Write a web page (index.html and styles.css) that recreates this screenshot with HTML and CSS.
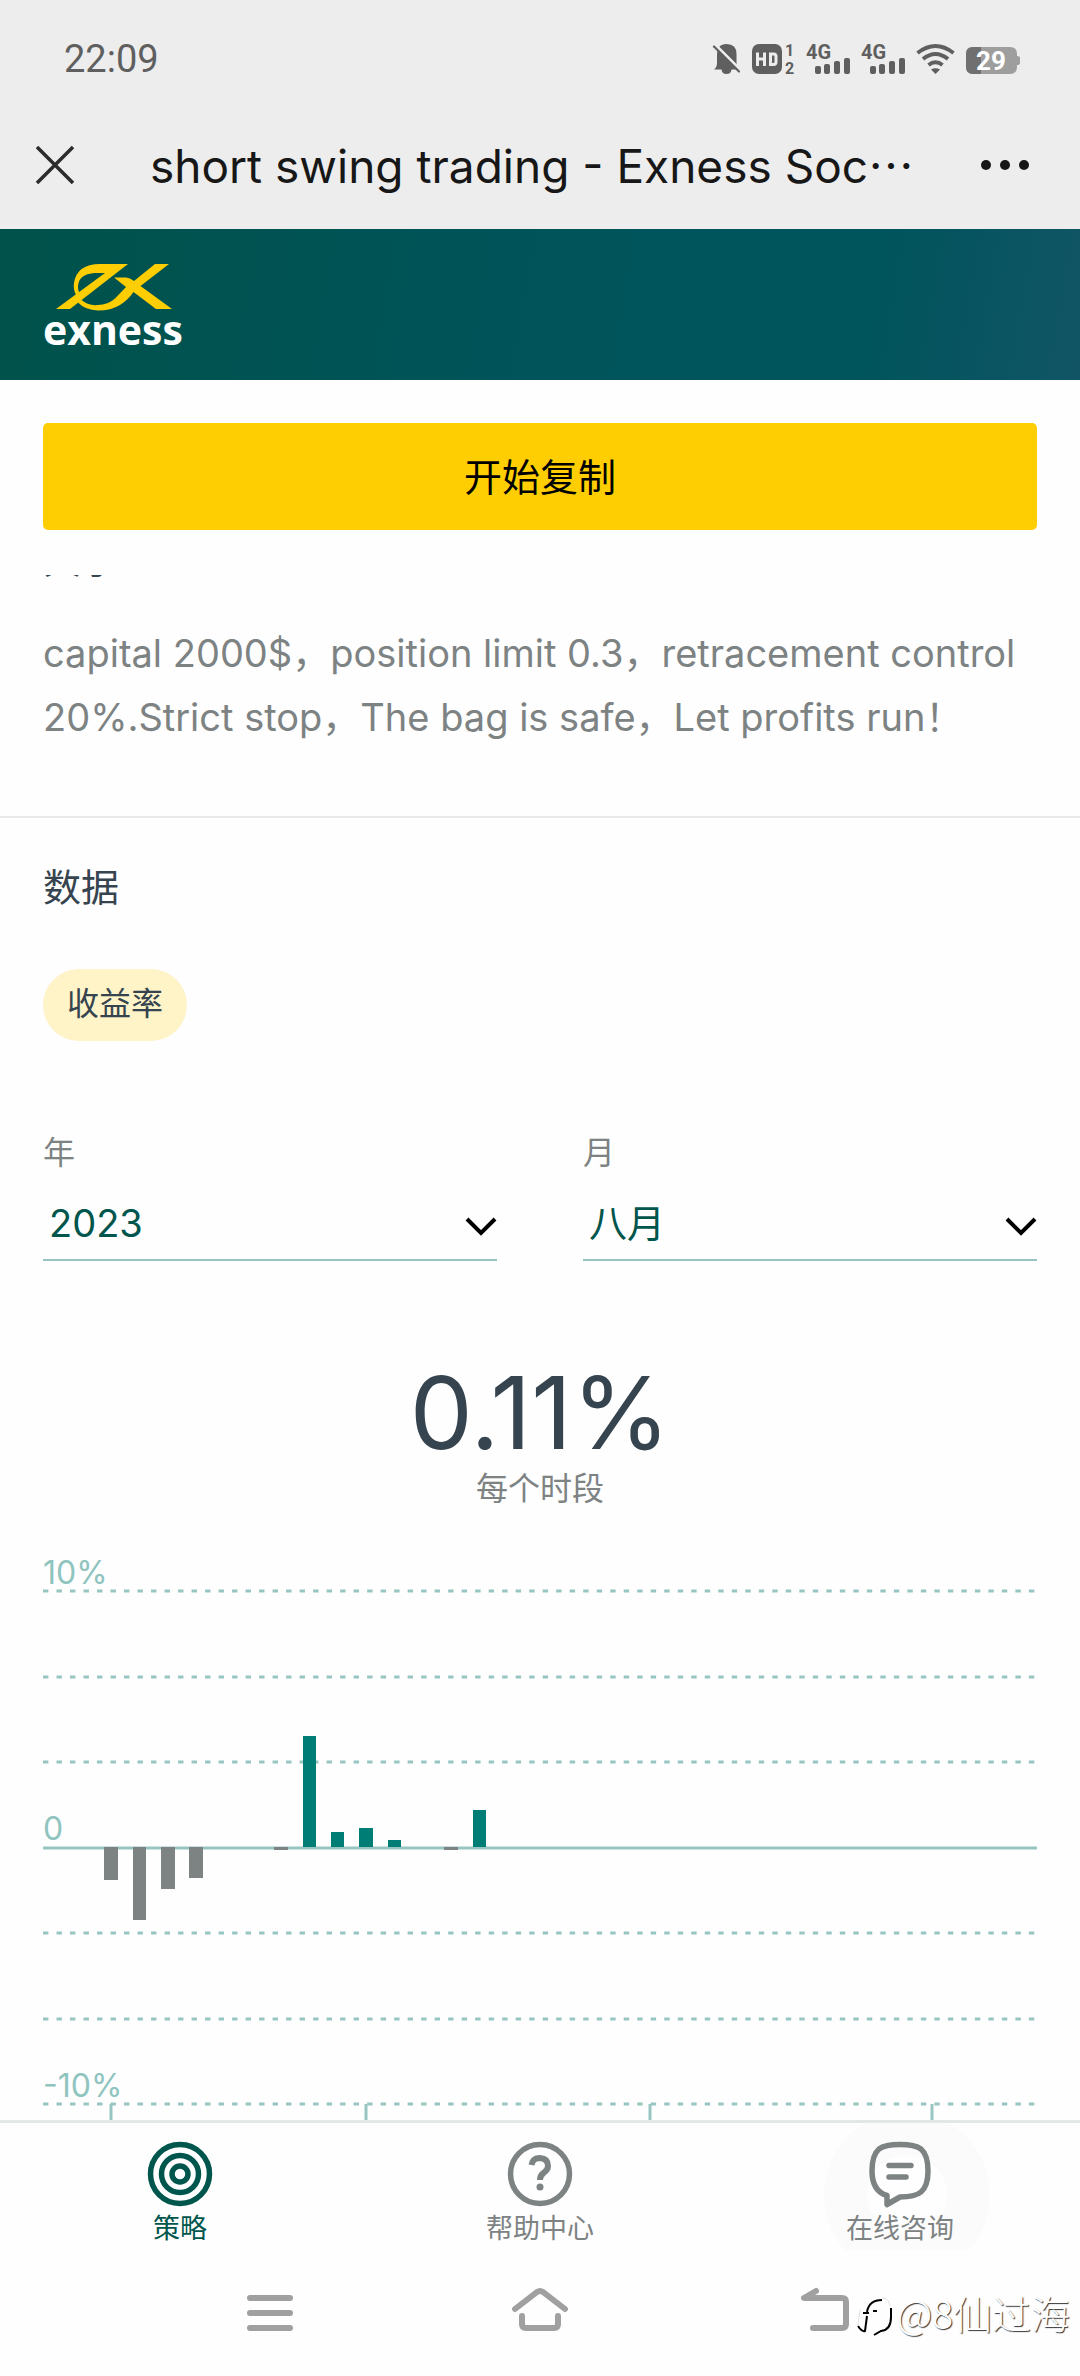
FILE: index.html
```html
<!DOCTYPE html>
<html lang="zh-CN">
<head>
<meta charset="utf-8">
<meta name="viewport" content="width=device-width, initial-scale=1">
<title>short swing trading - Exness Social Trading</title>
<link rel="stylesheet" href="styles.css">
</head>
<body>
<header class="topbar">
  <div class="status">
    <span class="clock">22:09</span>
    <div class="status-icons">
      <svg width="28" height="30" viewBox="0 0 28 30" fill="#5f5f5f"><path d="M1 25.500 Q4 23 4 19 V11 Q4 0 13.500 0 Q23.500 0 23.500 10 V19 Q23.500 23 26 25.500 H18.500 Q18 30 13.500 30 Q9 30 8.500 25.500 Z"/><path d="M1 -.500 L29 27.500" stroke="#ededed" stroke-width="3"/><path d="M1 2.500 L26 27.500" stroke="#5f5f5f" stroke-width="2.200" stroke-linecap="round"/></svg>
      <svg width="43" height="30" viewBox="0 0 43 30" fill="#5f5f5f"><rect width="30" height="30" rx="7"/><path d="M5.500 8.500 V22 M12.500 8.500 V22 M5.500 15 H12.500 M18.500 10 H21.500 Q24 10 24 12.500 V18 Q24 20.500 21.500 20.500 H18.500 Z" fill="none" stroke="#ededed" stroke-width="3"/><text class="sim-text" x="33" y="12">1</text><text class="sim-text" x="33" y="30">2</text></svg>
      <svg width="44" height="30" viewBox="0 0 44 30" fill="#5f5f5f"><text class="net-text" x="0" y="15">4G</text><rect x="9" y="22" width="6" height="8" rx="2"/><rect x="18" y="20" width="6" height="10" rx="2"/><rect x="28" y="17" width="6" height="13" rx="2"/><rect x="38" y="14" width="6" height="16" rx="2"/></svg>
      <svg width="44" height="30" viewBox="0 0 44 30" fill="#5f5f5f"><text class="net-text" x="0" y="15">4G</text><rect x="9" y="22" width="6" height="8" rx="2"/><rect x="18" y="20" width="6" height="10" rx="2"/><rect x="28" y="17" width="6" height="13" rx="2"/><rect x="38" y="14" width="6" height="16" rx="2"/></svg>
      <svg width="39" height="30" viewBox="0 0 39 30" fill="none" stroke="#5f5f5f" stroke-width="4"><path d="M1.500 9 Q19.500 -5 37.500 9"/><path d="M7 15 Q19.500 5 32 15"/><path d="M12.500 21 Q19.500 15.500 26.500 21"/><path d="M15 25.500 Q19.500 23 24 25.500 L19.500 30 Z" fill="#5f5f5f" stroke="none"/></svg>
      <svg width="54" height="30" viewBox="0 0 54 30"><path d="M7 3 H44 Q51 3 51 10 V12 Q54 12 54 14 V19 Q54 21 51 21 V23 Q51 30 44 30 H7 Q0 30 0 23 V10 Q0 3 7 3 Z" fill="#9e9e9e"/><path d="M15 3 V30 H7 Q0 30 0 23 V10 Q0 3 7 3 Z" fill="#707070"/><text class="battery-text" x="25" y="26">29</text></svg>
    </div>
  </div>
  <div class="titlebar">
    <button class="icon-button" type="button" aria-label="关闭"><svg width="38" height="38" viewBox="0 0 38 38"><path d="M1 1 L37 37 M37 1 L1 37" stroke="#2b2b2b" stroke-width="3.500"/></svg></button>
    <h1 class="page-title">short swing trading - Exness Soc<span class="dots">…</span></h1>
    <button class="icon-button" type="button" aria-label="更多"><svg width="48" height="38" viewBox="0 0 48 38" fill="#171717"><circle cx="5" cy="19" r="5"/><circle cx="24" cy="19" r="5"/><circle cx="43" cy="19" r="5"/></svg></button>
  </div>
</header>
<div class="brandbar">
  <a class="brand" href="#">
    <svg width="142" height="47" viewBox="0 0 142 47" fill="#ffce02"><path d="M85 0 L27 45 H13 L62 9 H52 Q35 10 35 23 Q35 26 36 28 L33 31 Q30 25 31 19 Q34 0 57 0 Z"/><path d="M71 13.500 H83 Q87 13.500 91 17 L112 0 H126 L97.500 22 L129 45 H113 L90.500 28 Q85 36 77 41 Q68 46.500 55 46.500 Q42 46 35 38.500 L38 35.500 Q45 42 55 41 Q65 41 72 34.500 L83 23 Z"/></svg>
    <span class="brand-name">exness</span>
  </a>
</div>
<main>
  <div class="cta"><button class="cta-button" type="button">开始复制</button></div>
  <section class="about">
    <div class="about-clip"><h2 class="heading">关于</h2></div>
    <p class="description">capital 2000$，position limit 0.3，retracement control 20%.Strict stop，The bag is safe，Let profits run！</p>
  </section>
  <section class="stats">
    <h2 class="heading">数据</h2>
    <button class="pill" type="button">收益率</button>
    <div class="filters">
      <div class="field">
        <label class="muted" for="year">年</label>
        <div class="select-box">
          <select id="year"><option>2022</option><option selected>2023</option></select>
          <svg class="chevron" width="32" height="20" viewBox="0 0 32 20"><path d="M2 2 L16 16 L30 2" fill="none" stroke="#000" stroke-width="4"/></svg>
        </div>
      </div>
      <div class="field">
        <label class="muted" for="month">月</label>
        <div class="select-box">
          <select id="month"><option>七月</option><option selected>八月</option></select>
          <svg class="chevron" width="32" height="20" viewBox="0 0 32 20"><path d="M2 2 L16 16 L30 2" fill="none" stroke="#000" stroke-width="4"/></svg>
        </div>
      </div>
    </div>
    <div class="total">0.11%</div>
    <div class="total-caption muted">每个时段</div>
    <svg class="chart" viewBox="0 0 994 579" role="img" aria-label="收益率">
      <g class="grid">
        <path pathLength="368" d="M0 50 H994"/><path pathLength="368" d="M0 136 H994"/><path pathLength="368" d="M0 221 H994"/>
        <path pathLength="368" d="M0 392 H994"/><path pathLength="368" d="M0 478 H994"/><path pathLength="368" d="M0 563 H994"/>
      </g>
      <path class="axis" d="M0 307 H994 M68 563 V579 M323 563 V579 M607 563 V579 M889 563 V579"/>
      <g fill="#7d8283">
        <rect x="61" y="306" width="14" height="33"/><rect x="90" y="306" width="13" height="73"/><rect x="118" y="306" width="14" height="42"/><rect x="146" y="306" width="14" height="31"/><rect x="231" y="306" width="14" height="3"/><rect x="401" y="306" width="14" height="3"/>
      </g>
      <g fill="#007d74">
        <rect x="260" y="195" width="13" height="111"/><rect x="288" y="291" width="13" height="15"/><rect x="316" y="287" width="14" height="19"/><rect x="345" y="299" width="13" height="7"/><rect x="430" y="269" width="13" height="37"/>
      </g>
      <g class="axis-text"><text x="0" y="43">10%</text><text x="0" y="299">0</text><text x="0" y="556">-10%</text></g>
    </svg>
  </section>
</main>
<nav class="tabs">
  <a class="tab tab-active" href="#"><svg width="66" height="66" viewBox="0 0 66 66" fill="none" stroke="currentColor" stroke-width="5.500"><circle cx="33" cy="33" r="29.500"/><circle cx="33" cy="33" r="18.500"/><circle cx="33" cy="33" r="8"/></svg><span>策略</span></a>
  <a class="tab" href="#"><svg width="66" height="66" viewBox="0 0 66 66" fill="none" stroke="currentColor" stroke-width="5.500"><circle cx="33" cy="33" r="29.500"/><path d="M24.500 24 Q25.500 17 33 17 Q41 17.500 41 25 Q41 29 36.500 32 Q33 34.500 33 39" stroke-width="6"/><circle cx="33" cy="46" r="3.500" fill="currentColor" stroke="none"/></svg><span>帮助中心</span></a>
  <a class="tab" href="#"><i class="ripple"></i><svg width="66" height="66" viewBox="0 0 66 66" fill="none" stroke="currentColor" stroke-width="5.500" stroke-linecap="round" stroke-linejoin="round"><path d="M33 3.500 Q48 3.500 54 8 Q61 14 61 30 Q61 45 54 51 Q48 56 33 56 L20 63.500 V54.500 Q5 50 5 30 Q5 14 12 8 Q18 3.500 33 3.500 Z"/><path d="M22 24.500 H44 M22 36 H39"/></svg><span>在线咨询</span></a>
</nav>
<footer class="system-nav">
  <button class="icon-button" type="button" aria-label="最近任务"><svg width="80" height="48" viewBox="0 0 80 48"><path d="M20 9 H60 M20 24 H60 M20 39 H60"/></svg></button>
  <button class="icon-button" type="button" aria-label="主页"><svg width="80" height="48" viewBox="0 0 80 48"><path d="M15 20 L37 3 Q40 1 43 3 L65 20 M22 27 V35 Q22 39 26 39 H54 Q58 39 58 35 V27"/></svg></button>
  <button class="icon-button" type="button" aria-label="返回"><svg width="80" height="48" viewBox="0 0 80 48"><path d="M46 2 L34 9 H72 Q76 9 76 13 V35 Q76 39 72 39 H43"/></svg></button>
  <div class="watermark"><svg width="36" height="40" viewBox="0 0 36 40"><path d="M1 30 Q5 36 8 35 L10 20 M6 17 H12 M16 15 H20 M10 16 Q12 4 25 4 M34 12 V21 Q34 34 24 35 L17 39" fill="none" stroke="#000" stroke-width="2"/><path d="M3 14 L1 29 M25 2 Q32 2 33 10" fill="none" stroke="#e2e2e2" stroke-width="1"/></svg><span>@8仙过海</span></div>
</footer>
</body>
</html>
```
FILE: styles.css
```css
* { box-sizing: border-box; }

body {
  margin: 0;
  background: #fefefe;
  color: #36444f;
  font-family: Inter, "Noto Sans CJK SC", sans-serif;
  font-size: 38px;
}

h1, h2, p { margin: 0; font-weight: 400; }
svg { display: block; flex: none; overflow: visible; }
a { color: inherit; text-decoration: none; }
button, select { font: inherit; color: inherit; border: 0; padding: 0; background: none; }

.topbar { background: #ededed; }

.status {
  display: flex;
  justify-content: space-between;
  align-items: center;
  height: 100px;
  padding: 18px 60px 0 64px;
}
.clock { font-family: Roboto, sans-serif; color: #5f5f5f; }
.status-icons { display: flex; gap: 11px; }
.net-text { font: 700 20px Roboto, sans-serif; }
.sim-text { font: 700 16px Roboto, sans-serif; }
.battery-text { font: 700 26px Roboto, sans-serif; fill: #fff; text-anchor: middle; }

.titlebar {
  display: flex;
  align-items: center;
  height: 129px;
  padding: 0 51px 0 36px;
}
.icon-button { display: grid; place-items: center; }
.page-title {
  flex: 1;
  padding-left: 76px;
  color: #171717;
  font-size: 46px;
  line-height: 64px;
  white-space: nowrap;
}
.dots { font-family: "Noto Sans CJK SC", sans-serif; }

.brandbar {
  height: 151px;
  padding: 35px 43px 0;
  background: linear-gradient(100deg, #00524a, #00545a 50%, #00545c 80%, #115565);
}
.brand { display: inline-block; }
.brand-name {
  display: block;
  color: #fff;
  font: 700 41px/36px "Open Sans", sans-serif;
}

.cta { padding: 43px 43px 45px; }
.cta-button {
  display: block;
  width: 100%;
  height: 107px;
  padding-bottom: 4px;
  border-radius: 5px;
  background: #ffce02;
  color: #000;
}

.about { padding-bottom: 67px; border-bottom: 2px solid #e8e8e8; }
.about-clip {
  display: flex;
  align-items: flex-end;
  height: 8px;
  overflow: hidden;
  padding: 0 43px;
}
.description {
  padding: 38px 43px 0;
  color: #7d8283;
  line-height: 64px;
}

.heading { font-size: 38px; line-height: 48px; }
.muted { color: #7d8283; font-size: 32px; }

.stats { padding: 45px 43px 0; }
.pill {
  display: block;
  height: 72px;
  margin-top: 58px;
  padding: 0 24px 8px;
  border-radius: 36px;
  background: #fff3c8;
  font-size: 32px;
}

.filters {
  display: grid;
  grid-template-columns: 1fr 1fr;
  gap: 86px;
  margin-top: 92px;
}
.field { display: grid; gap: 14px; }
.field label { line-height: 40px; }
.select-box { display: grid; align-items: center; border-bottom: 2px solid #97c2bf; }
.select-box select {
  grid-area: 1 / 1;
  height: 72px;
  padding-left: 6px;
  appearance: none;
  color: #00554c;
}
.chevron { grid-area: 1 / 1; justify-self: end; margin-top: 8px; pointer-events: none; }

.total { margin-top: 102px; font-size: 100px; line-height: 100px; text-align: center; }
.total-caption { padding-top: 2px; line-height: 48px; text-align: center; }

.chart { width: 100%; margin-top: 28px; }
.grid { fill: none; stroke: #97c5c2; stroke-width: 3; stroke-dasharray: 2 3; }
.axis { fill: none; stroke: #97c5c2; stroke-width: 3; }
.axis-text { fill: #8fc4bf; font-size: 32px; }

.tabs {
  display: grid;
  grid-template-columns: repeat(3, 1fr);
  height: 130px;
  border-top: 3px solid #e2e8e7;
  color: #7d8283;
  overflow: hidden;
}
.tab {
  position: relative;
  display: flex;
  flex-direction: column;
  align-items: center;
  gap: 2px;
  padding-top: 18px;
  font-size: 27px;
  line-height: 40px;
}
.tab svg, .tab span { position: relative; }
.tab-active { color: #00554c; }
.ripple {
  position: absolute;
  top: -11px;
  left: 50%;
  width: 166px;
  height: 166px;
  margin-left: -76px;
  border: 43px solid #fbfbfb;
  border-radius: 50%;
}

.system-nav {
  position: relative;
  display: grid;
  grid-template-columns: repeat(3, 1fr);
  align-items: center;
  height: 126px;
  padding: 0 135px;
}
.system-nav .icon-button svg { fill: none; stroke: #a0a0a0; stroke-width: 6; stroke-linecap: round; stroke-linejoin: round; }
.watermark {
  position: absolute;
  right: 10px;
  bottom: 36px;
  display: flex;
  align-items: center;
  gap: 4px;
  color: #fff;
  font: 300 39px/56px "Noto Sans CJK SC", sans-serif;
  text-shadow: 1px 1px 1px #333;
}
.watermark svg { margin-top: 8px; }
```
